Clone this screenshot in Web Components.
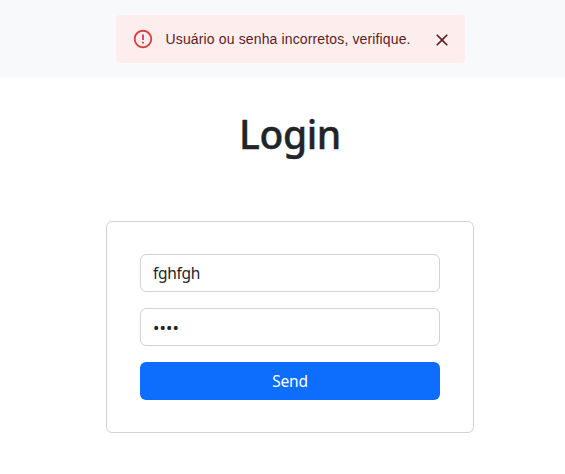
<!DOCTYPE html>
<html lang="pt-BR">
<head>
<meta charset="utf-8">
<title>Login</title>
<style>
body{margin:0;background:#fff;color:#212529;font:16px/24px "Noto Sans","Open Sans",sans-serif}
</style>
</head>
<body>
<login-page>
  <alert-message slot="notice">Usuário ou senha incorretos, verifique.</alert-message>
  <page-title>Login</page-title>
  <form-card>
    <text-field type="text" value="fghfgh" label="Usuário"></text-field>
    <text-field type="password" value="abcd" label="Senha"></text-field>
    <submit-button>Send</submit-button>
  </form-card>
</login-page>
<script>
const define = (name, html, setup) => customElements.define(name, class extends HTMLElement {
  constructor() {
    super();
    this.attachShadow({ mode: 'open' }).innerHTML = html;
  }
  connectedCallback() { if (setup) setup(this, this.shadowRoot); }
});

define('login-page', `
<style>
:host{display:block}
header{display:flex;justify-content:center;height:62px;padding-top:15px;background:#f8f9fa}
main{display:flex;flex-direction:column;align-items:center;padding:33px 0 0 15px}
</style>
<header><slot name="notice"></slot></header>
<main><slot></slot></main>`);

define('alert-message', `
<style>
:host{display:flex;box-sizing:border-box;width:349.5px;height:48px;padding:6px 16px;margin-left:15.5px;border-radius:4px;background:#fdeded;color:#5f2120;font:14px/20px "Liberation Sans",Arial,sans-serif;letter-spacing:.14px}
.icon{display:flex;padding:7px 0;margin-right:12px;color:#d32f2f;opacity:.9}
.text{padding:8px 0;white-space:nowrap;flex:1}
button{display:flex;margin:4px -8px 0 0;padding:5px;border:0;background:none;color:inherit;height:30px}
svg{display:block;fill:currentColor}
</style>
<span class="icon"><svg width="22" height="22" viewBox="0 0 24 24"><path d="M11 15h2v2h-2zm0-8h2v6h-2zm.99-5C6.47 2 2 6.48 2 12s4.47 10 9.99 10C17.52 22 22 17.52 22 12S17.52 2 11.99 2zM12 20c-4.42 0-8-3.58-8-8s3.58-8 8-8 8 3.58 8 8-3.58 8-8 8z"/></svg></span>
<span class="text"><slot></slot></span>
<button aria-label="Fechar"><svg width="20" height="20" viewBox="0 0 24 24"><path d="M19 6.41L17.59 5 12 10.59 6.41 5 5 6.41 10.59 12 5 17.59 6.41 19 12 13.41 17.59 19 19 17.59 13.41 12z"/></svg></button>`);

define('page-title', `
<style>
:host{display:block}
h1{margin:0;font-size:39px;line-height:48px;font-weight:500;letter-spacing:-.4px;-webkit-text-stroke:.4px currentColor}
</style>
<h1><slot></slot></h1>`);

define('form-card', `
<style>
:host{display:flex;flex-direction:column;gap:16px;box-sizing:border-box;width:368px;height:212px;margin-top:63px;padding:32px;border:1px solid #d0d1d4;border-radius:6px}
</style>
<slot></slot>`);

define('text-field', `
<style>
:host{display:block;width:300px;margin-left:1px}
input{display:block;box-sizing:border-box;width:300px;height:38px;margin:0;padding:6px 12px;border:1px solid #ced4da;border-radius:6px;background:#fff;color:#212529;font:inherit;font-size:15.5px;line-height:24px;letter-spacing:-.3px;outline:0}
input[type=password]{font-size:17px;letter-spacing:.1px;padding-top:7px}
</style>
<input>`, (host, root) => {
  const input = root.querySelector('input');
  input.type = host.getAttribute('type');
  input.value = host.getAttribute('value');
  input.setAttribute('aria-label', host.getAttribute('label'));
});

define('submit-button', `
<style>
:host{display:block;width:300px;margin-left:1px}
button{display:block;width:300px;height:38px;padding:0;border:0;border-radius:6px;background:#0d6efd;color:#fff;font:inherit;font-size:15.5px;line-height:24px;letter-spacing:-.2px}
</style>
<button><slot></slot></button>`);
</script>
</body>
</html>
